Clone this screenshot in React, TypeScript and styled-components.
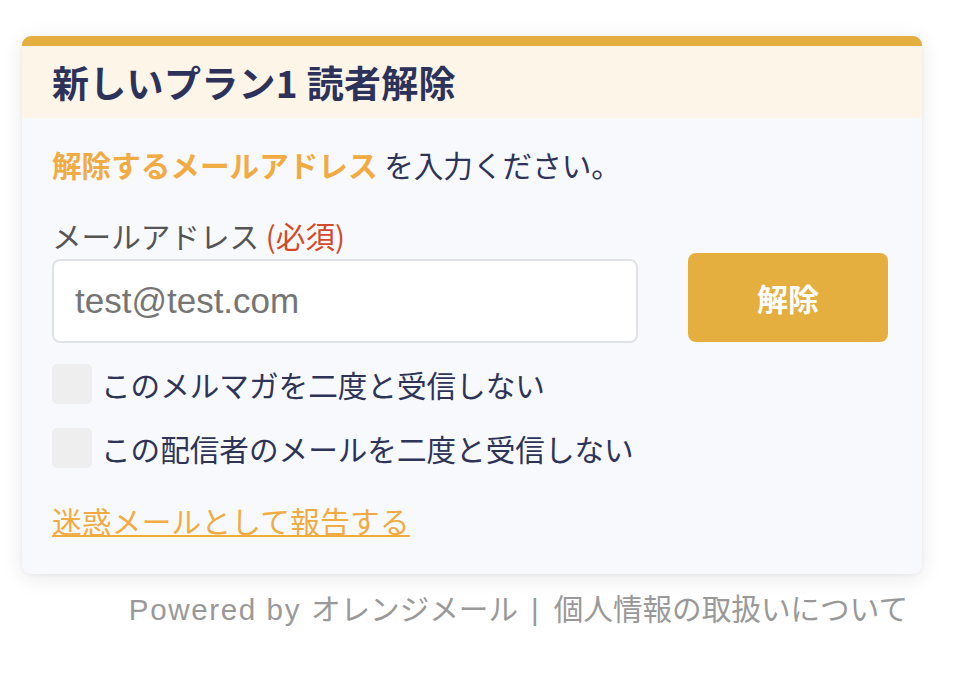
import React from "react";
import styled, { createGlobalStyle } from "styled-components";

const Global = createGlobalStyle`
  html, body { margin: 0; padding: 0; background: #ffffff; }
  body { font-family: "Noto Sans CJK JP", "Noto Sans", sans-serif; }
  * { box-sizing: border-box; }
`;

const Page = styled.div`
  width: 900px;
  margin: 36px 0 0 22px;
`;

const Card = styled.section`
  background: #f8f9fd;
  border-top: 10px solid #e4af3e;
  border-radius: 9px;
  box-shadow: 0 4px 22px rgba(0, 0, 0, 0.09), 0 1px 4px rgba(0, 0, 0, 0.05);
  overflow: hidden;
`;

const Header = styled.header`
  height: 72px;
  background: #fcf5e8;
  display: flex;
  align-items: center;
  padding: 0 30px;
`;

const Title = styled.h1`
  margin: 0;
  font-size: 37px;
  font-weight: 700;
  line-height: 1;
  color: #2d325a;
  letter-spacing: 0.3px;
`;

const Body = styled.div`
  padding: 25px 34px 31px 30px;
  display: flex;
  flex-direction: column;
`;

const Line = styled.p`
  margin: 0;
  font-size: 29.6px;
  line-height: 44px;
  color: #2e3358;
`;

const Accent = styled.strong`
  color: #f0ab42;
  font-weight: 700;
`;

const FormRow = styled.div`
  display: flex;
  align-items: flex-start;
  justify-content: space-between;
  margin-top: 27px;
`;

const Field = styled.div`
  display: flex;
  flex-direction: column;
  width: 586px;
`;

const Label = styled.label`
  font-size: 29.6px;
  line-height: 44px;
  color: #555555;
`;

const Required = styled.span`
  color: #d24a2a;
`;

const Input = styled.input`
  margin-top: 1px;
  height: 84px;
  width: 100%;
  border: 2px solid #e1e2e7;
  border-radius: 8px;
  background: #ffffff;
  padding: 0 21px;
  font-family: "Liberation Sans", Arial, sans-serif;
  font-size: 35px;
  color: #333;
  outline: none;
  &::placeholder { color: #757575; }
`;

const Button = styled.button`
  margin-top: 39px;
  width: 200px;
  height: 89px;
  border: none;
  border-radius: 8px;
  background: #e4af3e;
  color: #ffffff;
  font-family: "Noto Sans CJK JP", sans-serif;
  font-size: 31px;
  font-weight: 700;
  cursor: pointer;
`;

const CheckRow = styled.label<{ $gap: number }>`
  display: flex;
  align-items: center;
  gap: 9px;
  margin-top: ${(p) => p.$gap}px;
  height: 40px;
  font-size: 29.6px;
  color: #2e3358;
  cursor: pointer;
`;

const Box = styled.span`
  width: 40px;
  height: 40px;
  border-radius: 5px;
  background: #eeeeee;
  flex: none;
`;

const Link = styled.a`
  margin-top: 31px;
  align-self: flex-start;
  font-size: 29.6px;
  line-height: 44px;
  color: #f0ab42;
  text-decoration: underline;
  text-decoration-thickness: 2px;
  text-underline-offset: 2px;
  letter-spacing: 0.3px;
  cursor: pointer;
`;

const Footer = styled.footer`
  margin-top: 12px;
  padding-right: 14px;
  text-align: right;
  font-size: 29.6px;
  line-height: 44px;
  color: #999999;
`;

const Latin = styled.span`
  font-family: "Liberation Sans", Arial, sans-serif;
  letter-spacing: 1.6px;
`;

const Separator = styled.span`
  font-family: "Liberation Sans", Arial, sans-serif;
  margin: 0 15px 0 13px;
`;

export default function App() {
  return (
    <>
      <Global />
      <Page>
        <Card>
          <Header>
            <Title>新しいプラン1 読者解除</Title>
          </Header>
          <Body>
            <Line>
              <Accent>解除するメールアドレス</Accent> を入力ください。
            </Line>
            <FormRow>
              <Field>
                <Label htmlFor="email">
                  メールアドレス <Required>(必須)</Required>
                </Label>
                <Input id="email" type="email" placeholder="test@test.com" />
              </Field>
              <Button type="button">解除</Button>
            </FormRow>
            <CheckRow $gap={21}>
              <Box />
              このメルマガを二度と受信しない
            </CheckRow>
            <CheckRow $gap={24}>
              <Box />
              この配信者のメールを二度と受信しない
            </CheckRow>
            <Link>迷惑メールとして報告する</Link>
          </Body>
        </Card>
        <Footer>
          <Latin>Powered by </Latin>オレンジメール<Separator>|</Separator>個人情報の取扱いについて
        </Footer>
      </Page>
    </>
  );
}
